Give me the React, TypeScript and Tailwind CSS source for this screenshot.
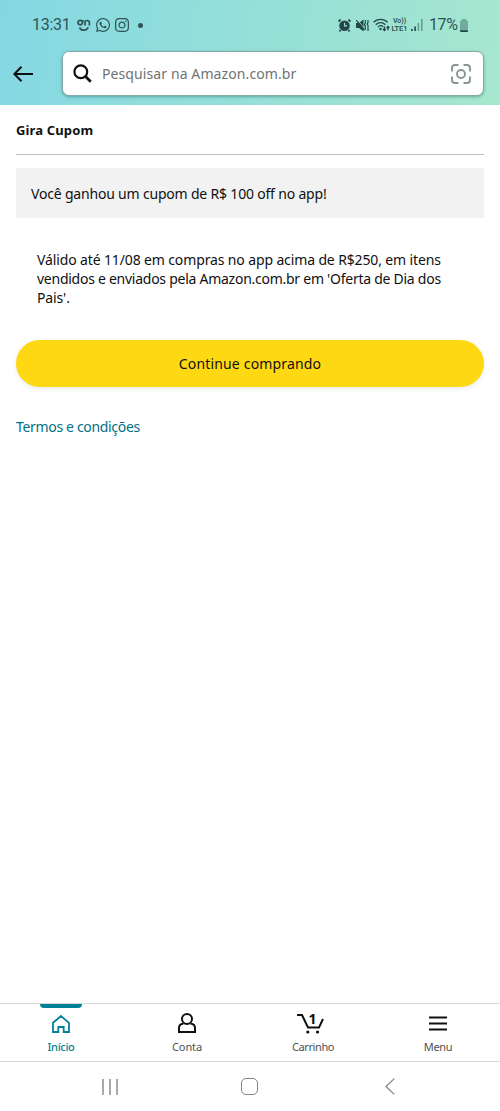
import React from 'react';
import { FaWhatsapp, FaInstagram } from 'react-icons/fa';

const StatusBar = () => (
  <div className="flex h-[50px] items-center justify-between pl-8 pr-8 font-['Roboto',sans-serif] text-base text-[#2f5558]">
    <div className="flex items-center">
      <span className="w-[45px] tracking-[-0.3px]">13:31</span>
      <svg className="h-[13px] w-[14px]" viewBox="0 0 14 13" fill="none" stroke="currentColor" strokeWidth="1.7">
        <circle cx="3.2" cy="3.6" r="2.2" />
        <path d="M4.8 2h2.400M8 6.400V3.600c0-2.800 4.400-2.800 4.400 0v2.800M2.600 8.400c1.200 3.800 7.400 3.600 8.600-.2" />
      </svg>
      <FaWhatsapp className="ml-1 h-4 w-4" />
      <FaInstagram className="ml-[3px] h-4 w-4" />
      <span className="ml-2 h-[5px] w-[5px] rounded-full bg-[#2f5558]" />
    </div>
    <div className="flex items-center">
      <svg className="h-[13px] w-[13px]" viewBox="0 0 13 13">
        <path d="M2.6 0.5L0.5 2.6M10.4 0.5l2.1 2.1M2.5 11l-1 1.5M10.5 11l1 1.5" stroke="#24484a" strokeWidth="1.8" />
        <circle cx="6.5" cy="6.7" r="5.3" fill="#24484a" />
        <path d="M6.5 3.7v3.2h2.6" fill="none" stroke="#98e0d4" strokeWidth="1.1" />
      </svg>
      <svg className="ml-[5px] h-[13px] w-[13px]" viewBox="0 0 13 13" fill="none">
        <path d="M0 4h3l4.500-3.500v12L3 9H0z" fill="#24484a" />
        <path d="M1.500 1L8 9" stroke="#98e0d4" strokeWidth="1" />
        <path d="M0.300 1.200L8.500 11" stroke="#24484a" strokeWidth="1.200" />
        <path d="M9.300 1v3l-.8 1.500.8 1.500v4M12 1v2.500l-.8 1.500.8 1.500v5.500" stroke="#24484a" strokeWidth="1.200" />
      </svg>
      <svg className="ml-1 h-[14px] w-[17px]" viewBox="0 0 17 14" fill="none" stroke="#24484a" strokeWidth="1.3">
        <path d="M.6 4.3C4.4.3 10.8.3 14.6 4.3M2.8 6.7c2.6-2.7 7-2.7 9.6 0M5 9c1.5-1.5 3.7-1.5 5.2-.2" />
        <circle cx="7.500" cy="11" r="1.200" fill="#24484a" stroke="none" />
        <path d="M11.400 8.600v3.800M10 11l1.400 1.600 1.400-1.600M15 12.300V8.500M13.600 10L15 8.500l1.400 1.500" />
      </svg>
      <div className="ml-px flex w-[17px] flex-col items-center whitespace-nowrap text-[7px] font-medium leading-[7px] text-[#24484a]">
        <span>Vo))</span>
        <span className="text-[7.500px]">LTE1</span>
      </div>
      <svg className="ml-[3px] h-3 w-3" viewBox="0 0 12 12" fill="#24484a">
        <path d="M0 10h1.600v2H0zM3.300 7.400h1.600V12H3.300z" />
        <path d="M6.600 4h1.600v8H6.600zM10 0h1.600v12H10z" opacity=".45" />
      </svg>
      <span className="ml-[6px] w-[31px] tracking-[-0.4px]">17%</span>
      <svg className="h-[13px] w-[8px]" viewBox="0 0 8 13">
        <path d="M2 0h4v1.500h1q1 0 1 1V12q0 1-1 1H1q-1 0-1-1V2.500q0-1 1-1h1z" fill="#70ab9d" />
        <path d="M0 11.200h8V12q0 1-1 1H1q-1 0-1-1z" fill="#24484a" />
      </svg>
    </div>
  </div>
);

const SearchBar = () => (
  <div className="flex items-center pl-[13px] pr-4 pt-px">
    <svg className="h-4 w-5 shrink-0" viewBox="0 0 20 16" fill="none" stroke="#0f1111" strokeWidth="2">
      <path d="M20 8H1.500M8.500.8L1.300 8l7.200 7.200" />
    </svg>
    <div className="ml-[29px] flex h-[45px] flex-1 items-center rounded-[7px] border border-[#86a9a8] bg-white pl-[10px] pr-3 shadow-[0_1px_3px_rgba(0,60,60,0.35)]">
      <svg className="h-[19px] w-[19px]" viewBox="0 0 19 19" fill="none" stroke="#0f1111">
        <circle cx="7.800" cy="7.800" r="6.400" strokeWidth="2.200" />
        <path d="M12.300 12.300l5.500 5.500" strokeWidth="2.700" />
      </svg>
      <span className="ml-[10px] flex-1 whitespace-nowrap text-[14px] tracking-[0.1px] text-[#6f7373]">
        Pesquisar na Amazon.com.br
      </span>
      <svg className="h-5 w-5" viewBox="0 0 20 20" fill="none" stroke="#879596" strokeWidth="1.900">
        <path d="M1 7.500V4q0-3 3-3h3.500M12.500 1H16q3 0 3 3v3.500M19 12.500V16q0 3-3 3h-3.500M7.500 19H4q-3 0-3-3v-3.500" />
        <circle cx="10" cy="10" r="4" />
      </svg>
    </div>
  </div>
);

const BottomNav = () => (
  <nav className="grid h-[59px] grid-cols-[122px_130px_122px_128px] border-y border-[#d5dbdb] text-[11px] tracking-[-0.3px] text-[#4d5252]">
    <div className="flex flex-col items-center text-[#008296]">
      <span className="h-1 w-[42px] rounded-b bg-[#008296]" />
      <svg className="mt-[7px] h-[18px] w-[18px]" viewBox="0 0 18 18" fill="none" stroke="currentColor" strokeWidth="1.800">
        <path d="M1 7.800L9 1l8 6.800V17h-5.300v-5H6.300v5H1z" />
      </svg>
      <span className="mt-[6px] font-medium leading-[15px]">Início</span>
    </div>
    <div className="flex flex-col items-center pt-[9px]">
      <svg className="h-5 w-[18px]" viewBox="0 0 18 20" fill="none" stroke="#0f1111" strokeWidth="2">
        <circle cx="9" cy="6" r="5" />
        <path d="M5.400 10.800H5Q1 11.300 1 15v4h16v-4q0-3.700-4-4.200h-.4" />
      </svg>
      <span className="mt-[6px] leading-[15px] tracking-[-0.1px]">Conta</span>
    </div>
    <div className="flex flex-col items-center pt-[9px]">
      <div className="relative h-5 w-[33px]">
        <svg className="h-[21px] w-[27px]" viewBox="0 0 27 21" fill="none" stroke="#0f1111" strokeWidth="2">
          <path d="M0 2h5l6 12.500h11L26 6" />
          <circle cx="10.800" cy="19" r="1.600" fill="#0f1111" stroke="none" />
          <circle cx="20.500" cy="19" r="1.600" fill="#0f1111" stroke="none" />
        </svg>
        <span className="absolute left-[12px] top-[-2px] text-[14px] font-bold leading-[15px] text-[#0f1111]">1</span>
      </div>
      <span className="mt-[6px] leading-[15px] tracking-[-0.4px]">Carrinho</span>
    </div>
    <div className="flex flex-col items-center pt-[12px]">
      <svg className="h-[15px] w-[18px]" viewBox="0 0 18 15" stroke="#0f1111" strokeWidth="2">
        <path d="M0 1.500h18M0 7.500h18M0 13.500h18" />
      </svg>
      <span className="mt-[8px] leading-[15px]">Menu</span>
    </div>
  </nav>
);

const SystemBar = () => (
  <div className="flex h-[49px] items-center pl-[102px] text-[#858585]">
    <svg className="h-4 w-4" viewBox="0 0 16 16" stroke="currentColor" strokeWidth="1.400">
      <path d="M1 0v16M8 0v16M15 0v16" />
    </svg>
    <span className="ml-[123px] h-[17px] w-[17px] rounded-[5px] border-[1.500px] border-current" />
    <svg className="ml-[127px] h-[17px] w-[10px]" viewBox="0 0 10 17" fill="none" stroke="currentColor" strokeWidth="1.300">
      <path d="M9.300.6L1 8.500l8.300 7.900" />
    </svg>
  </div>
);

const App = () => {
  return (
    <div className="flex h-[1111px] w-[500px] flex-col overflow-hidden bg-white font-['Noto_Sans',sans-serif] text-[14px] text-[#0f1111]">
      <header className="h-[105px] bg-linear-[100deg,#84d8e3,#a6e7ce]">
        <StatusBar />
        <SearchBar />
      </header>
      <main className="flex flex-1 flex-col px-4">
        <h1 className="flex h-[50px] items-center border-b border-[#bbc0c0] pt-[3px] text-[13px] font-bold tracking-[0.15px]">
          Gira Cupom
        </h1>
        <p className="mt-[13px] flex h-[50px] items-center whitespace-nowrap bg-[#f2f2f2] pl-[15px] tracking-[-0.19px]">
          Você ganhou um cupom de R$ 100 off no app!
        </p>
        <p className="mt-8 whitespace-nowrap pl-[21px] leading-[19px] tracking-[-0.13px]">
          Válido até 11/08 em compras no app acima de R$250, em itens
          <br />
          <span className="tracking-[-0.26px]">vendidos e enviados pela Amazon.com.br em 'Oferta de Dia dos</span>
          <br />
          Pais'.
        </p>
        <button className="mt-[33px] h-[47px] rounded-full bg-[#ffd814] tracking-[0.17px] shadow-[0_2px_5px_rgba(213,217,217,0.5)]">
          Continue comprando
        </button>
        <a className="mt-[30px] leading-5 tracking-[-0.33px] text-[#007185]">Termos e condições</a>
      </main>
      <BottomNav />
      <SystemBar />
    </div>
  );
};

export default App;
